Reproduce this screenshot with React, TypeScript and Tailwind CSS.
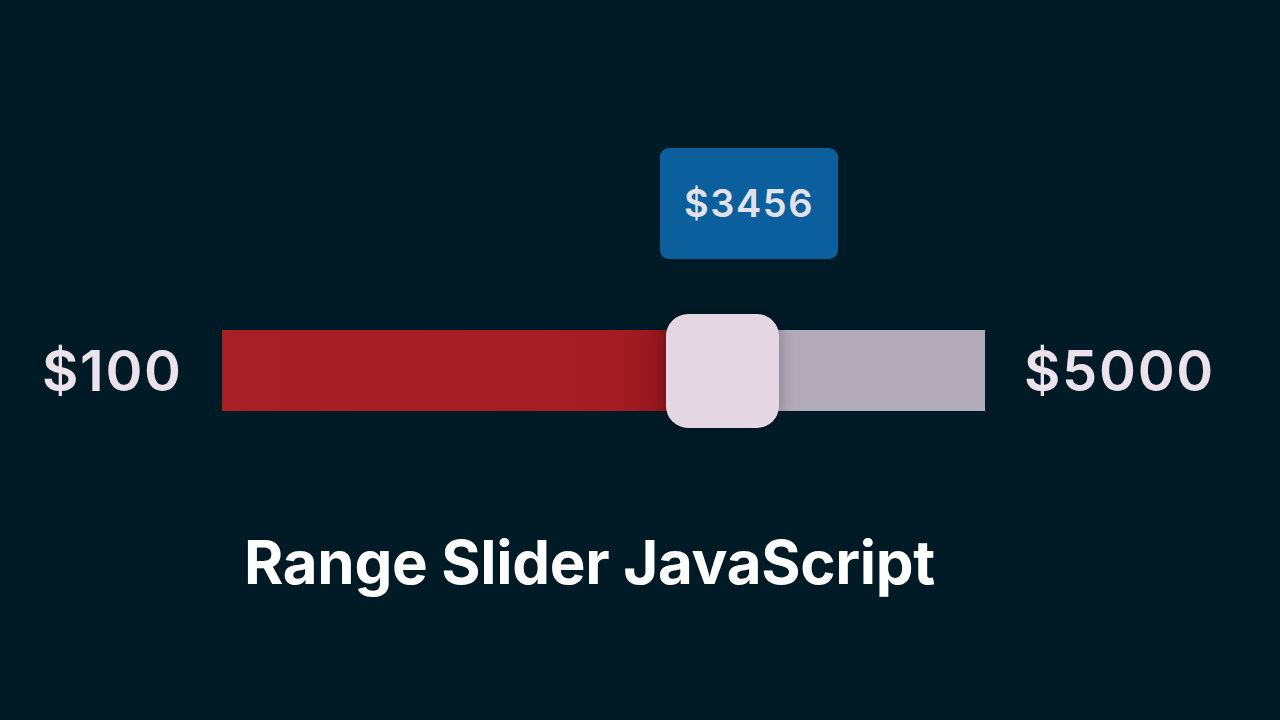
import React from "react";

// Price range slider card: min/max labels, filled track, thumb and value bubble.
const MIN = 100;
const MAX = 5000;
const VALUE = 3456;

export default function App() {
  const fillPx = 470; // where the red fill stops, in px from the track's left edge

  return (
    <div
      className="h-screen w-full bg-[#011b26] flex flex-col overflow-hidden"
      style={{ fontFamily: "Inter, 'Noto Sans', sans-serif" }}
    >
      <div className="pt-[330px] flex items-center">
        <span className="w-[222px] pl-[42px] text-[56px] font-semibold leading-none tracking-[0.03em] text-[#ece2ee]">
          ${MIN}
        </span>

        <div className="relative w-[763px] h-[81px] bg-[#b2aab9]">
          <div
            className="h-full bg-gradient-to-r from-[#a81f25] via-[#a31d23] via-85% to-[#8a1318]"
            style={{ width: fillPx }}
          />

          {/* value bubble */}
          <div className="absolute left-[438px] top-[-182px] w-[178px] h-[111px] rounded-[9px] bg-[#0c5f9d] flex items-center justify-center">
            <span className="text-[38px] font-semibold tracking-[0.04em] text-[#e2e2ec]">
              ${VALUE}
            </span>
          </div>

          {/* thumb */}
          <div className="absolute left-[444px] top-[-16px] w-[113px] h-[114px] rounded-[22px] bg-[#e5d6e4] shadow-[0_0_16px_rgba(0,0,0,0.3)]" />
        </div>

        <span className="ml-[39px] text-[56px] font-semibold leading-none tracking-[0.03em] text-[#ece2ee]">
          ${MAX}
        </span>
      </div>

      <h1 className="mt-[121px] pl-[244px] text-[60px] font-bold leading-none tracking-[-0.005em] text-white">
        Range Slider JavaScript
      </h1>
    </div>
  );
}
